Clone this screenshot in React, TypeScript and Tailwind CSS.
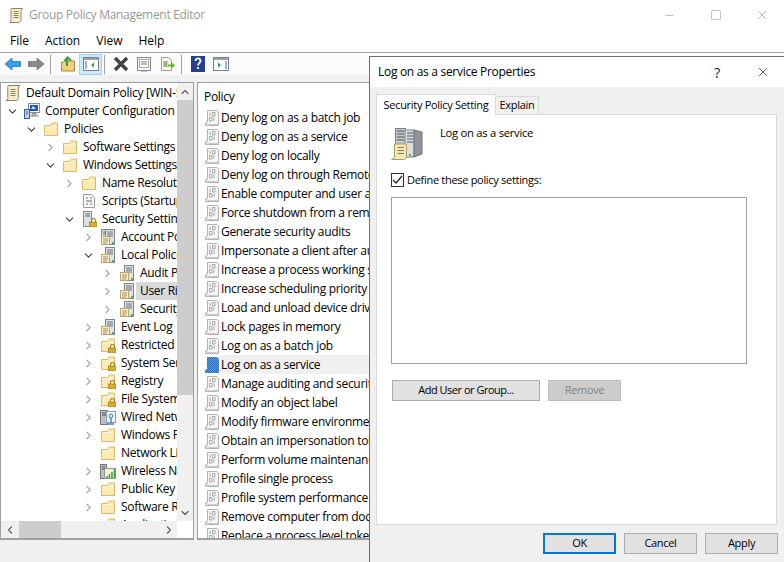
import { ChevronDown, ChevronRight, ChevronUp, ChevronLeft, Minus, Square, X } from "lucide-react";

type IconKind = "scroll" | "computer" | "folder" | "script" | "shield" | "server" | "servers" | "lockfolder" | "wired" | "wireless";
type Row = { depth: number; chevron?: "down" | "right"; icon: IconKind; label: string; selected?: boolean };

const treeRows: Row[] = [
  { depth: 0, icon: "scroll", label: "Default Domain Policy [WIN-5RJ2K1FBPK5.CONTOSO.LOCAL] Policy" },
  { depth: 1, chevron: "down", icon: "computer", label: "Computer Configuration" },
  { depth: 2, chevron: "down", icon: "folder", label: "Policies" },
  { depth: 3, chevron: "right", icon: "folder", label: "Software Settings" },
  { depth: 3, chevron: "down", icon: "folder", label: "Windows Settings" },
  { depth: 4, chevron: "right", icon: "folder", label: "Name Resolution Policy" },
  { depth: 4, icon: "script", label: "Scripts (Startup/Shutdown)" },
  { depth: 4, chevron: "down", icon: "shield", label: "Security Settings" },
  { depth: 5, chevron: "right", icon: "servers", label: "Account Policies" },
  { depth: 5, chevron: "down", icon: "server", label: "Local Policies" },
  { depth: 6, chevron: "right", icon: "server", label: "Audit Policy" },
  { depth: 6, chevron: "right", icon: "server", label: "User Rights Assignment", selected: true },
  { depth: 6, chevron: "right", icon: "server", label: "Security Options" },
  { depth: 5, chevron: "right", icon: "server", label: "Event Log" },
  { depth: 5, chevron: "right", icon: "lockfolder", label: "Restricted Groups" },
  { depth: 5, chevron: "right", icon: "lockfolder", label: "System Services" },
  { depth: 5, chevron: "right", icon: "lockfolder", label: "Registry" },
  { depth: 5, chevron: "right", icon: "lockfolder", label: "File System" },
  { depth: 5, chevron: "right", icon: "wired", label: "Wired Network (IEEE 802.3)" },
  { depth: 5, chevron: "right", icon: "folder", label: "Windows Firewall" },
  { depth: 5, icon: "folder", label: "Network List Manager" },
  { depth: 5, chevron: "right", icon: "wireless", label: "Wireless Network (IEEE 802.11)" },
  { depth: 5, chevron: "right", icon: "folder", label: "Public Key Policies" },
  { depth: 5, chevron: "right", icon: "folder", label: "Software Restriction" },
  { depth: 5, chevron: "right", icon: "folder", label: "Application Control" },
];

const policies = [
  "Deny log on as a batch job",
  "Deny log on as a service",
  "Deny log on locally",
  "Deny log on through Remote Desktop Services",
  "Enable computer and user accounts to be trusted",
  "Force shutdown from a remote system",
  "Generate security audits",
  "Impersonate a client after authentication",
  "Increase a process working set",
  "Increase scheduling priority",
  "Load and unload device drivers",
  "Lock pages in memory",
  "Log on as a batch job",
  "Log on as a service",
  "Manage auditing and security log",
  "Modify an object label",
  "Modify firmware environment values",
  "Obtain an impersonation token for another user",
  "Perform volume maintenance tasks",
  "Profile single process",
  "Profile system performance",
  "Remove computer from docking station",
  "Replace a process level token",
];

const depthPad: Record<number, string> = {
  0: "pl-[4px]",
  1: "pl-[4px]",
  2: "pl-[23px]",
  3: "pl-[42px]",
  4: "pl-[61px]",
  5: "pl-[80px]",
  6: "pl-[99px]",
};

function Folder() {
  return (
    <>
      <path d="M1.500 14.500V4.500h6l1.500-2.500h5.500v12.500z" fill="#fde9b2" stroke="#d8b96e" />
      <path d="M2.500 5.500h11" stroke="#fff6d8" />
    </>
  );
}

function Lock() {
  return (
    <>
      <path d="M10.500 11V9.500a2 2 0 0 1 4 0V11" fill="none" stroke="#8c6a1c" />
      <rect x="8.500" y="11" width="7.500" height="5" fill="#dcaa26" stroke="#9a7415" strokeWidth="0.600" />
    </>
  );
}

function ServerDoc() {
  return (
    <>
      <rect x="5.500" y="0.500" width="9" height="15" fill="#dfe2e4" stroke="#7e8489" />
      <path d="M7 3h6M7 5h6M7 7h6" stroke="#6b7176" />
      <rect x="12" y="13" width="2" height="2" fill="#48c048" />
      <rect x="1.500" y="7.500" width="8" height="8" fill="#f9edc6" stroke="#bda86e" />
      <path d="M3 10h5M3 12h5M3 14h4" stroke="#a8925d" />
    </>
  );
}

function TreeIcon({ kind }: { kind: IconKind }) {
  return (
    <svg width="16" height="16" viewBox="0 0 16 16" className="shrink-0">
      {kind === "scroll" && (
        <>
          <path d="M3.500 0.500h11.500c-1.500 1-1.700 2-1.700 3v9c0 1.500-.8 3-2.300 3H1c1.300-.5 1.800-1.500 1.800-3V3c0-1-.3-1.700.7-2.500z" fill="#f8edc9" stroke="#8d8468" />
          <path d="M5.500 4.500h5M5.500 6.500h5M5.500 8.500h5M5.500 10.500h5" stroke="#8d8468" />
        </>
      )}
      {kind === "computer" && (
        <>
          <rect x="4.500" y="0.500" width="11" height="9" fill="#fff" stroke="#8a9098" />
          <rect x="6" y="2" width="8" height="6" fill="#1d57b8" />
          <path d="M7 6l2-3 3 3" fill="#cfe3ff" />
          <path d="M8 10.500h4v2H8zM6 13h9" fill="#c4c9ce" stroke="#8a9098" />
          <rect x="0.500" y="6.500" width="5" height="9" fill="#cfd4d9" stroke="#2f5f9f" />
          <path d="M2 9h2M2 11h2" stroke="#2f5f9f" />
        </>
      )}
      {kind === "folder" && <Folder />}
      {kind === "script" && (
        <>
          <path d="M2.500 1.500h8l3 3v10h-11z" fill="#fafafa" stroke="#9a9a9a" />
          <path d="M5 5h2M9 5h2M5 8h6M5 11h2M9 11h2" stroke="#666" />
        </>
      )}
      {kind === "shield" && (
        <>
          <rect x="2.500" y="0.500" width="8" height="15" fill="#dfe2e4" stroke="#868c91" />
          <path d="M4 3h5M4 5h5" stroke="#5f666b" />
          <Lock />
        </>
      )}
      {kind === "server" && <ServerDoc />}
      {kind === "servers" && (
        <>
          <rect x="1.500" y="0.500" width="6" height="12" fill="#dfe2e4" stroke="#7e8489" />
          <path d="M3 3h3M3 5h3" stroke="#5f666b" />
          <ServerDoc />
        </>
      )}
      {kind === "lockfolder" && (
        <>
          <Folder />
          <Lock />
        </>
      )}
      {kind === "wired" && (
        <>
          <rect x="0.500" y="1.500" width="7" height="14" fill="#b9bfc5" stroke="#6f757b" />
          <path d="M2 4h4M2 6h4" stroke="#4f565b" />
          <rect x="6.500" y="2.500" width="9" height="11" fill="#f3f6fa" stroke="#8aa0b8" />
          <path d="M11 5v9M8 15h6" stroke="#4a86bd" strokeWidth="1.500" />
          <circle cx="11" cy="7" r="2" fill="#dcebf7" stroke="#4a86bd" />
        </>
      )}
      {kind === "wireless" && (
        <>
          <rect x="0.500" y="1.500" width="6" height="14" fill="#b9bfc5" stroke="#6f757b" />
          <path d="M2 4h3M2 6h3" stroke="#4f565b" />
          <rect x="4.500" y="5.500" width="11" height="10" fill="#f5f3d8" stroke="#8f9a7a" />
          <path d="M7 15v-2M9.500 15v-4M12 15v-6M14.500 15V6" stroke="#3a9c3a" strokeWidth="1.500" />
        </>
      )}
    </svg>
  );
}

function PolicyIcon({ active }: { active?: boolean }) {
  if (active) {
    return (
      <svg width="16" height="18" viewBox="0 0 16 18" className="shrink-0">
        <defs>
          <pattern id="dither" width="2" height="2" patternUnits="userSpaceOnUse">
            <rect width="2" height="2" fill="#5b9be0" />
            <rect width="1" height="1" fill="#2a6cc0" />
            <rect x="1" y="1" width="1" height="1" fill="#2a6cc0" />
          </pattern>
        </defs>
        <path d="M3 1h10l2 2v14H1v-3l2-1z" fill="url(#dither)" />
      </svg>
    );
  }
  return (
    <svg width="16" height="18" viewBox="0 0 16 18" className="shrink-0">
      <path d="M3.500 1.500h9.500l1.500 1.500v13.500H1.500v-2.500l2-1z" fill="#f7f7f7" stroke="#b4b4b4" />
      <path d="M2 14.500c3 1.500 7 1.500 12 .5" stroke="#c4c4c4" fill="none" />
      <path d="M6 3.500v3.500M8.500 3.500h2.500v3.500H8.500zM5.500 8.500h2.500v3.500H5.500zM10 8.500v3.500" fill="none" stroke="#a8a8a8" />
    </svg>
  );
}

function Toolbar() {
  return (
    <div className="flex h-[22px] shrink-0 items-center bg-[#fbfbfb] pl-[5px]">
      <svg width="16" height="16" viewBox="0 0 16 16" className="shrink-0">
        <path d="M0 8l7-6v3.500h9v5H7V14z" fill="#3c9be8" stroke="#1e6fb5" strokeWidth="0.700" />
      </svg>
      <svg width="16" height="16" viewBox="0 0 16 16" className="ml-[7px] shrink-0">
        <path d="M16 8L9 2v3.500H0v5h9V14z" fill="#8a8a8a" stroke="#6e6e6e" strokeWidth="0.700" />
      </svg>
      <div className="ml-[6px] h-[19px] w-px bg-[#a0a0a0]" />
      <svg width="16" height="16" viewBox="0 0 16 16" className="ml-[9px] shrink-0">
        <path d="M1.500 15V6h4l1-1h8v10z" fill="#f2cf78" stroke="#a98a3d" />
        <path d="M7 10V3M4.500 5L7.500 1.500 11 4.500" fill="none" stroke="#38a038" strokeWidth="2" />
      </svg>
      <div className="ml-[3px] flex h-[21px] w-[23px] items-center justify-center border border-[#99d1ff] bg-[#cce8ff]">
        <svg width="16" height="14" viewBox="0 0 16 14">
          <rect x="0.500" y="0.500" width="15" height="13" fill="#fff" stroke="#808080" />
          <rect x="1" y="1" width="14" height="2" fill="#9ca3af" />
          <path d="M2 5h2M2 7h2M2 9h2M2 11h2" stroke="#2f6fb0" />
          <path d="M11 5.500v5L8 8z" fill="#2f9e44" />
        </svg>
      </div>
      <div className="ml-[2px] h-[19px] w-px bg-[#a0a0a0]" />
      <svg width="16" height="16" viewBox="0 0 16 16" className="ml-[8px] shrink-0">
        <path d="M2 2l12 12M14 2L2 14" stroke="#444" strokeWidth="3.500" />
      </svg>
      <svg width="16" height="16" viewBox="0 0 16 16" className="ml-[7px] shrink-0">
        <rect x="1.500" y="1.500" width="13" height="13" fill="#f5f5f5" stroke="#8a8a8a" />
        <rect x="3.500" y="3.500" width="9" height="8" fill="#fff" stroke="#a8a8a8" />
        <path d="M5 6h6M5 8h6" stroke="#777" />
        <path d="M5 15h6" stroke="#4aa3df" />
      </svg>
      <svg width="16" height="16" viewBox="0 0 16 16" className="ml-[7px] shrink-0">
        <path d="M2.500 1.500h7l3 3v10h-10z" fill="#fbf6e6" stroke="#9a9a9a" />
        <path d="M4.500 6h4M4.500 8h4M4.500 10h4" stroke="#555" />
        <path d="M9 8.500h3V6l4 3.500-4 3.500v-2.500H9z" fill="#56c02b" />
      </svg>
      <div className="ml-[6px] h-[19px] w-px bg-[#a0a0a0]" />
      <svg width="14" height="16" viewBox="0 0 14 16" className="ml-[9px] shrink-0">
        <rect width="14" height="16" fill="#24408f" />
        <path d="M4.500 5c0-3.500 5-3.500 5 0 0 2-2.500 2-2.500 4.500M7 11v2" fill="none" stroke="#fff" strokeWidth="1.800" />
      </svg>
      <svg width="16" height="14" viewBox="0 0 16 14" className="ml-[8px] shrink-0">
        <rect x="0.500" y="0.500" width="15" height="13" fill="#fff" stroke="#808080" />
        <rect x="1" y="1" width="14" height="2" fill="#9ca3af" />
        <path d="M12 5h2M12 7h2M12 9h2M12 11h2" stroke="#2f6fb0" />
        <path d="M5 5.500v5L8 8z" fill="#2f9e44" />
      </svg>
    </div>
  );
}

function TreePane() {
  return (
    <div className="flex h-full w-[194px] shrink-0 flex-col border border-b-2 border-[#a0a0a0] bg-white">
      <div className="flex min-h-0 flex-1">
        <div className="min-w-0 flex-1 overflow-hidden pt-px">
          {treeRows.map((row) => (
            <div key={row.label} className={`flex h-[18px] items-center whitespace-nowrap ${depthPad[row.depth]}`}>
              {row.depth > 0 && (
                <span className="flex w-[19px] shrink-0 items-center justify-start pl-px">
                  {row.chevron === "down" && <ChevronDown size={13} strokeWidth={2} className="text-[#404040]" />}
                  {row.chevron === "right" && <ChevronRight size={13} strokeWidth={2} className="text-[#a6a6a6]" />}
                </span>
              )}
              <TreeIcon kind={row.icon} />
              <span className={`ml-px flex h-[18px] items-center pl-[4px] pr-[40px] ${row.selected ? "bg-[#d9d9d9]" : ""}`}>
                {row.label}
              </span>
            </div>
          ))}
        </div>
        <div className="flex w-[16px] shrink-0 flex-col items-center bg-[#f0f0f0]">
          <div className="flex h-[17px] items-center justify-center">
            <ChevronUp size={12} strokeWidth={2.500} className="text-[#606060]" />
          </div>
          <div className="h-[295px] w-full bg-[#cdcdcd]" />
          <div className="flex-1" />
          <div className="flex h-[17px] items-center justify-center">
            <ChevronDown size={12} strokeWidth={2.500} className="text-[#606060]" />
          </div>
        </div>
      </div>
      <div className="flex h-[17px] shrink-0 items-center">
        <div className="flex h-full flex-1 items-center bg-[#f0f0f0]">
          <div className="flex w-[18px] justify-center">
            <ChevronLeft size={12} strokeWidth={2.500} className="text-[#606060]" />
          </div>
          <div className="h-full w-[42px] bg-[#cdcdcd]" />
          <div className="flex-1" />
          <div className="flex w-[17px] justify-center">
            <ChevronRight size={12} strokeWidth={2.500} className="text-[#606060]" />
          </div>
        </div>
        <div className="h-full w-[16px]" />
      </div>
    </div>
  );
}

function PolicyPane() {
  return (
    <div className="ml-[3px] flex h-full min-w-0 flex-1 flex-col overflow-hidden border border-b-2 border-[#a0a0a0] bg-white">
      <div className="flex h-[25px] shrink-0 items-center pl-[6px] pt-[2px]">Policy</div>
      <div className="overflow-hidden">
        {policies.map((name) => {
          const active = name === "Log on as a service";
          return (
            <div key={name} className="flex h-[19px] items-center whitespace-nowrap pl-[6px]">
              <PolicyIcon active={active} />
              <span className={`flex h-[19px] flex-1 items-center pl-px ${active ? "bg-[#f0f0f0]" : ""}`}>{name}</span>
            </div>
          );
        })}
      </div>
    </div>
  );
}

function DlgButton({ label, disabled, primary, wide }: { label: string; disabled?: boolean; primary?: boolean; wide?: boolean }) {
  const tone = disabled
    ? "border border-[#bfbfbf] bg-[#cccccc] text-[#838383]"
    : primary
      ? "border-2 border-[#0078d7] bg-[#e1e1e1]"
      : "border border-[#adadad] bg-[#e1e1e1]";
  return (
    <div className={`flex h-[21px] items-center justify-center ${wide ? "w-[148px] tracking-[-0.045em]" : "w-[73px]"} ${tone}`}>{label}</div>
  );
}

function PropertiesDialog() {
  return (
    <div className="absolute left-[369px] top-[56px] flex h-[506px] w-[415px] flex-col border-l border-t border-[#6e6e6e] bg-[#f0f0f0]">
      <div className="flex h-[30px] shrink-0 items-center bg-white pl-[8px]">
        <span>Log on as a service Properties</span>
        <span className="ml-auto text-[14px] text-[#222]">?</span>
        <X size={14} strokeWidth={1.200} className="ml-[36px] mr-[14px] text-[#111]" />
      </div>
      <div className="flex pl-[6px] pt-[7px] text-[11px]">
        <div className="z-10 -mb-px flex h-[21px] w-[120px] items-center justify-center border border-b-0 border-[#d9d9d9] bg-white">
          Security Policy Setting
        </div>
        <div className="mt-[2px] flex h-[18px] w-[43px] items-center justify-center border border-b-0 border-l-0 border-[#d9d9d9] bg-[#f0f0f0]">
          Explain
        </div>
      </div>
      <div className="ml-[6px] flex h-[411px] w-[401px] flex-col border border-[#d9d9d9] bg-white pl-[14px] pt-[12px] text-[11px]">
        <div className="flex h-[34px] items-start">
          <svg width="32" height="34" viewBox="0 0 32 34" className="shrink-0">
            <rect x="4.500" y="1.500" width="10" height="22" fill="#c3c8cc" stroke="#7a8186" />
            <path d="M6 4h7M6 7h7M6 10h7M6 13h7" stroke="#4f565b" />
            <path d="M14 3h9v27h-9z" fill="#dbdfe2" stroke="#7a8186" />
            <path d="M16 6h6M16 9h6M16 12h6M16 15h6" stroke="#4f565b" />
            <path d="M23 3l8 2v22l-8 3z" fill="#8f959a" stroke="#6d7479" />
            <rect x="18" y="27" width="2" height="2" fill="#48c048" />
            <path d="M0.500 32c2 0 3-1 3-3V17h12v12c0 2-1 3.500-3 3.500H1.500z" fill="#f7e8ba" stroke="#b39a5e" />
            <path d="M6.500 20.500h6.500M6.500 23.500h6.500M6.500 26.500h6.500" stroke="#8d7a4c" />
          </svg>
          <span className="ml-[17px] mt-[-2px] text-[11.300px]">Log on as a service</span>
        </div>
        <div className="mt-[12px] flex h-[14px] items-center">
          <span className="flex h-[14px] w-[13px] items-center justify-center border border-[#333] bg-white">
            <svg width="11" height="10" viewBox="0 0 11 10">
              <path d="M1 5l3 3 6-7" fill="none" stroke="#222" strokeWidth="1.200" />
            </svg>
          </span>
          <span className="ml-[3px]">Define these policy settings:</span>
        </div>
        <div className="mt-[10px] h-[167px] w-[356px] border border-[#a0a0a0] bg-white" />
        <div className="ml-px mt-[16px] flex gap-[8px]">
          <DlgButton label="Add User or Group..." wide />
          <DlgButton label="Remove" disabled />
        </div>
      </div>
      <div className="ml-[173px] mt-[8px] flex gap-[8px] text-[11px]">
        <DlgButton label="OK" primary />
        <DlgButton label="Cancel" />
        <DlgButton label="Apply" />
      </div>
    </div>
  );
}

export default function App() {
  return (
    <div className="relative flex h-[562px] w-[784px] flex-col overflow-hidden bg-[#f0f0f0] font-['Open_Sans',sans-serif] text-[12px] tracking-[-0.025em] text-black">
      <div className="flex h-[30px] shrink-0 items-center bg-white pl-[8px]">
        <svg width="16" height="17" viewBox="0 0 16 17" className="shrink-0">
          <path d="M3.500 1.500h11c-1 1-1.500 2-1.500 3v8c0 1.500-1 3-2.500 3h-9c1-.5 1.500-1.500 1.500-3v-9c0-1-.2-1.500.500-2z" fill="#f8edc9" stroke="#8d8468" />
          <path d="M5.500 4.500h5M5.500 6.500h5M5.500 8.500h5M5.500 10.500h5" stroke="#8d8468" />
        </svg>
        <span className="ml-[5px] text-[#999]">Group Policy Management Editor</span>
        <Minus size={13} strokeWidth={1} className="ml-auto text-[#888]" />
        <Square size={12} strokeWidth={1} className="ml-[34px] text-[#888]" />
        <X size={14} strokeWidth={1} className="ml-[33px] mr-[15px] text-[#888]" />
      </div>
      <div className="flex h-[22px] shrink-0 items-center gap-[16px] bg-white pl-[10px] tracking-normal">
        <span>File</span>
        <span>Action</span>
        <span>View</span>
        <span>Help</span>
      </div>
      <div className="h-px shrink-0 bg-[#a0a0a0]" />
      <Toolbar />
      <div className="h-[7px] shrink-0" />
      <div className="flex h-[458px] shrink-0">
        <TreePane />
        <PolicyPane />
      </div>
      <PropertiesDialog />
    </div>
  );
}
